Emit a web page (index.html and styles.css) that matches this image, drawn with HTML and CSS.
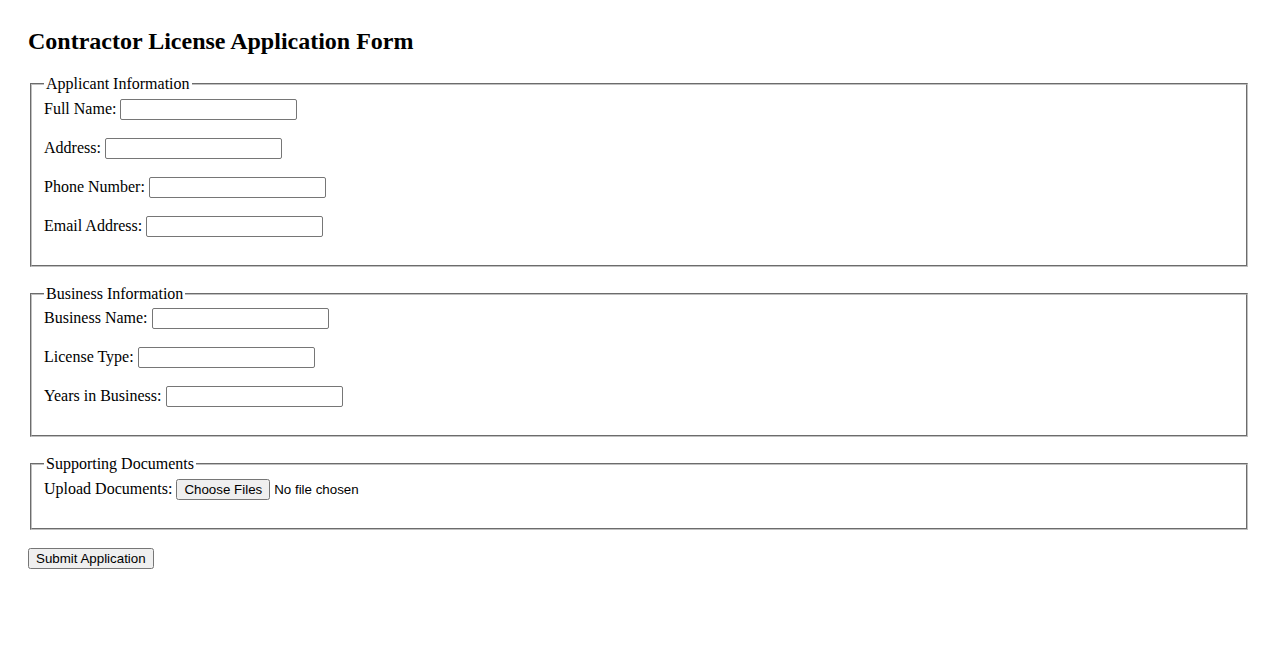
FILE: index.html
```html
<!DOCTYPE html>
<html>
<head>
<meta charset="utf-8">
<title>Contractor License Application Form</title>
<link rel="stylesheet" href="styles.css">
</head>
<body class="page">
<h2 class="title">Contractor License Application Form</h2>
<form class="form">
<fieldset class="group">
<legend class="group-legend">Applicant Information</legend>
<label class="field-label" for="fullName">Full Name:</label> <input class="text-input" type="text" id="fullName"><br><br>
<label class="field-label" for="address">Address:</label> <input class="text-input" type="text" id="address"><br><br>
<label class="field-label" for="phone">Phone Number:</label> <input class="text-input" type="tel" id="phone"><br><br>
<label class="field-label" for="email">Email Address:</label> <input class="text-input" type="email" id="email"><br><br>
</fieldset>
<br>
<fieldset class="group">
<legend class="group-legend">Business Information</legend>
<label class="field-label" for="bizName">Business Name:</label> <input class="text-input" type="text" id="bizName"><br><br>
<label class="field-label" for="licType">License Type:</label> <input class="text-input" type="text" id="licType"><br><br>
<label class="field-label" for="years">Years in Business:</label> <input class="text-input" type="number" id="years"><br><br>
</fieldset>
<br>
<fieldset class="group">
<legend class="group-legend">Supporting Documents</legend>
<label class="field-label" for="docs">Upload Documents:</label> <input class="file-input" type="file" id="docs" multiple><br><br>
</fieldset>
<br>
<input class="submit-btn" type="submit" value="Submit Application">
</form>
</body>
</html>
```

FILE: styles.css
```css
html {
  background: #ffffff;
}
.page {
  margin: 28px;
  font-family: "Liberation Serif", "Times New Roman", serif;
  font-size: 16px;
  color: #000000;
}
.title {
  font-size: 24px;
  font-weight: bold;
  margin: 0 0 19.92px;
}
.form {
  margin: 0;
}
.group {
  margin: 0 2px;
  padding: 0.35em 0.75em 0.625em;
  border: 2px groove #c0c0c0;
}
.group-legend {
  padding: 0 2px;
}
.text-input {
  box-sizing: border-box;
  width: 177px;
  height: 21px;
  font-family: "Liberation Sans", Arial, sans-serif;
  font-size: 13.33px;
  border: 1px solid #767676;
  border-radius: 2px;
  padding: 1px 2px;
}
.file-input {
  font-family: "Liberation Sans", Arial, sans-serif;
  font-size: 13.33px;
}
.submit-btn {
  font-family: "Liberation Sans", Arial, sans-serif;
  font-size: 13.33px;
}
```
